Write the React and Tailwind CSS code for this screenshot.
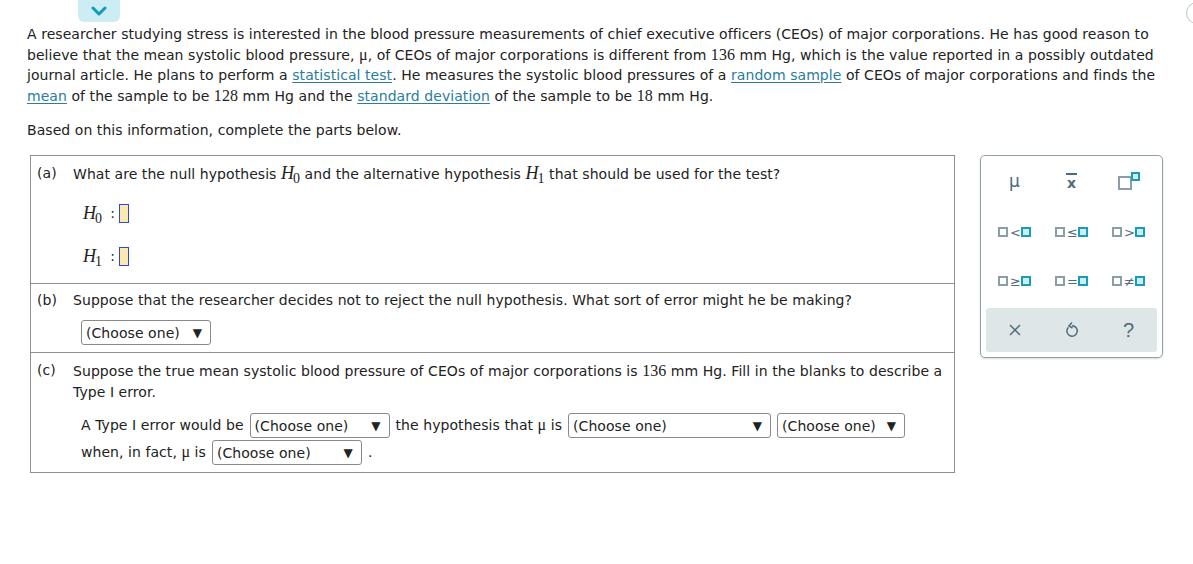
import React from "react";

const sans = { fontFamily: '"DejaVu Sans", Verdana, sans-serif' };

function Num({ children }) {
  return <span className="font-['Liberation_Serif'] text-[16px] leading-none">{children}</span>;
}
function Mu() {
  return <span className="font-['Liberation_Serif'] text-[16px] leading-none">μ</span>;
}
function Link({ children }) {
  return <span className="text-[#2a7d9c] underline underline-offset-2">{children}</span>;
}
function H({ sub }) {
  return (
    <span className="font-['Liberation_Serif'] italic text-[18px] leading-none inline-block">
      H<span className="not-italic text-[14px] inline-block relative top-[4px] -ml-[1px]">{sub}</span>
    </span>
  );
}
function Select({ w }) {
  return (
    <span
      className={`inline-flex items-center justify-between h-[25px] border border-[#8a8a8a] rounded-[3px] pl-[4px] pr-[8px] bg-white leading-none ${w}`}
    >
      <span>(Choose one)</span>
      <span className="text-[12px]">▼</span>
    </span>
  );
}
function Sq({ filled }) {
  return filled ? (
    <span className="inline-block w-[10px] h-[10px] border-2 border-[#1b9bb4] bg-[#c9eef4]" />
  ) : (
    <span className="inline-block w-[10px] h-[10px] border-2 border-[#8a9ea6] bg-white" />
  );
}
function Rel({ op }) {
  return (
    <span className="inline-flex items-center gap-[2px] text-[#4d6c78] text-[13px] leading-none">
      <Sq />
      <span className="w-[9px] text-center">{op}</span>
      <Sq filled />
    </span>
  );
}

export default function App() {
  return (
    <div className="relative w-[1193px] h-[564px] bg-white text-[14px] text-[#222] tracking-[0.06px]" style={sans}>
      {/* top chevron tab */}
      <div className="absolute left-[78px] top-0 w-[42px] h-[22px] bg-[#cdedf4] rounded-b-[6px] flex items-center justify-center">
        <svg width="16" height="10" viewBox="0 0 16 10">
          <path d="M2 2 L8 8 L14 2" stroke="#0f9bbd" strokeWidth="3" fill="none" strokeLinecap="round" strokeLinejoin="round" />
        </svg>
      </div>
      {/* top right circle */}
      <div className="absolute left-[1186px] top-[2px] w-[22px] h-[22px] rounded-full border border-[#b9c7cc]" />

      <div className="pl-[27px] pt-[24px]">
        <p className="leading-[20.5px]">
          A researcher studying stress is interested in the blood pressure measurements of chief executive officers (CEOs) of major corporations. He has good reason to
          <br />
          believe that the mean systolic blood pressure, <Mu />, of CEOs of major corporations is different from <Num>136</Num> mm Hg, which is the value reported in a possibly outdated
          <br />
          journal article. He plans to perform a <Link>statistical test</Link>. He measures the systolic blood pressures of a <Link>random sample</Link> of CEOs of major corporations and finds the
          <br />
          <Link>mean</Link> of the sample to be <Num>128</Num> mm Hg and the <Link>standard deviation</Link> of the sample to be <Num>18</Num> mm Hg.
        </p>
        <p className="mt-[14px] leading-[20px]">Based on this information, complete the parts below.</p>

        <div className="flex items-start mt-[15px] ml-[3px]">
          {/* question box */}
          <div className="w-[925px] border border-[#8f8f8f]">
            {/* (a) */}
            <div className="h-[128px] border-b border-[#8f8f8f] pt-[7px] pl-[6px]">
              <div className="flex leading-[20px]">
                <span className="w-[36px]">(a)</span>
                <span className="mt-[1px]">
                  What are the null hypothesis <H sub="0" /> and the alternative hypothesis <H sub="1" /> that should be used for the test?
                </span>
              </div>
              <div className="pl-[46px] mt-[14px] flex items-center gap-[8px] h-[30px]">
                <H sub="0" />
                <span>:</span>
                <span className="w-[10px] h-[19px] border border-[#2c46e0] bg-[#fde9b0] -ml-[4px]" />
              </div>
              <div className="pl-[46px] mt-[13px] flex items-center gap-[8px] h-[30px]">
                <H sub="1" />
                <span>:</span>
                <span className="w-[10px] h-[19px] border border-[#2c46e0] bg-[#fde9b0] -ml-[4px]" />
              </div>
            </div>
            {/* (b) */}
            <div className="h-[69px] border-b border-[#8f8f8f] pt-[6px] pl-[6px]">
              <div className="flex leading-[20px]">
                <span className="w-[36px]">(b)</span>
                <span>Suppose that the researcher decides not to reject the null hypothesis. What sort of error might he be making?</span>
              </div>
              <div className="pl-[44px] mt-[10px]">
                <Select w="w-[130px]" />
              </div>
            </div>
            {/* (c) */}
            <div className="h-[119px] pt-[7px] pl-[6px]">
              <div className="flex">
                <span className="w-[36px]">(c)</span>
                <span className="leading-[21px] mt-[1px]">
                  Suppose the true mean systolic blood pressure of CEOs of major corporations is <Num>136</Num> mm Hg. Fill in the blanks to describe a
                  <br />
                  Type I error.
                </span>
              </div>
              <div className="pl-[44px] mt-[9px]">
                <div className="flex items-center gap-[6px] h-[27px]">
                  <span>A Type I error would be</span>
                  <Select w="w-[140px]" />
                  <span>the hypothesis that <Mu /> is</span>
                  <Select w="w-[203px]" />
                  <Select w="w-[128px]" />
                </div>
                <div className="flex items-center gap-[6px] h-[27px]">
                  <span>when, in fact, <Mu /> is</span>
                  <Select w="w-[150px]" />
                  <span>.</span>
                </div>
              </div>
            </div>
          </div>

          {/* right palette */}
          <div className="ml-[25px] w-[183px] h-[203px] border border-[#8da2aa] rounded-[5px] shadow-[0_1px_2px_rgba(0,0,0,0.15)] p-[5px] flex flex-col">
            <div className="grid grid-cols-3 h-[30px] mt-[5px] text-[#4d6c78]">
              <div className="flex items-center justify-center">
                <span className="text-[17px] font-['DejaVu_Sans'] leading-none">μ</span>
              </div>
              <div className="flex items-center justify-center">
                <span className="text-[14px] font-bold leading-none border-t-2 border-[#4d6c78] pt-[1px] px-[1px]">x</span>
              </div>
              <div className="flex items-center justify-center">
                <span className="relative inline-block w-[22px] h-[18px]">
                  <span className="absolute left-0 bottom-0 w-[14px] h-[14px] border-2 border-[#8a9ea6] bg-white" />
                  <span className="absolute right-0 top-0 w-[9px] h-[9px] border-2 border-[#1b9bb4] bg-[#c9eef4]" />
                </span>
              </div>
            </div>
            <div className="grid grid-cols-3 h-[30px] mt-[21px]">
              <div className="flex items-center justify-center"><Rel op="<" /></div>
              <div className="flex items-center justify-center"><Rel op="≤" /></div>
              <div className="flex items-center justify-center"><Rel op=">" /></div>
            </div>
            <div className="grid grid-cols-3 h-[30px] mt-[19px]">
              <div className="flex items-center justify-center"><Rel op="≥" /></div>
              <div className="flex items-center justify-center"><Rel op="=" /></div>
              <div className="flex items-center justify-center"><Rel op="≠" /></div>
            </div>
            <div className="mt-auto h-[44px] bg-[#dfe6e8] rounded-[3px] grid grid-cols-3 items-center text-[#4d6c78]">
              <div className="flex justify-center">
                <svg width="14" height="14" viewBox="0 0 14 14">
                  <path d="M2 2 L12 12 M12 2 L2 12" stroke="#4d6c78" strokeWidth="1.5" />
                </svg>
              </div>
              <div className="flex justify-center">
                <svg width="16" height="18" viewBox="0 0 16 18">
                  <path d="M4.5 6.2 A5.2 5.2 0 1 0 8 4.8" stroke="#4d6c78" strokeWidth="1.5" fill="none" />
                  <path d="M8 1.5 L5 4.8 L8.5 7" stroke="#4d6c78" strokeWidth="1.5" fill="none" />
                </svg>
              </div>
              <div className="flex justify-center">
                <span className="text-[20px] font-['Liberation_Sans'] leading-none">?</span>
              </div>
            </div>
          </div>
        </div>
      </div>
    </div>
  );
}
